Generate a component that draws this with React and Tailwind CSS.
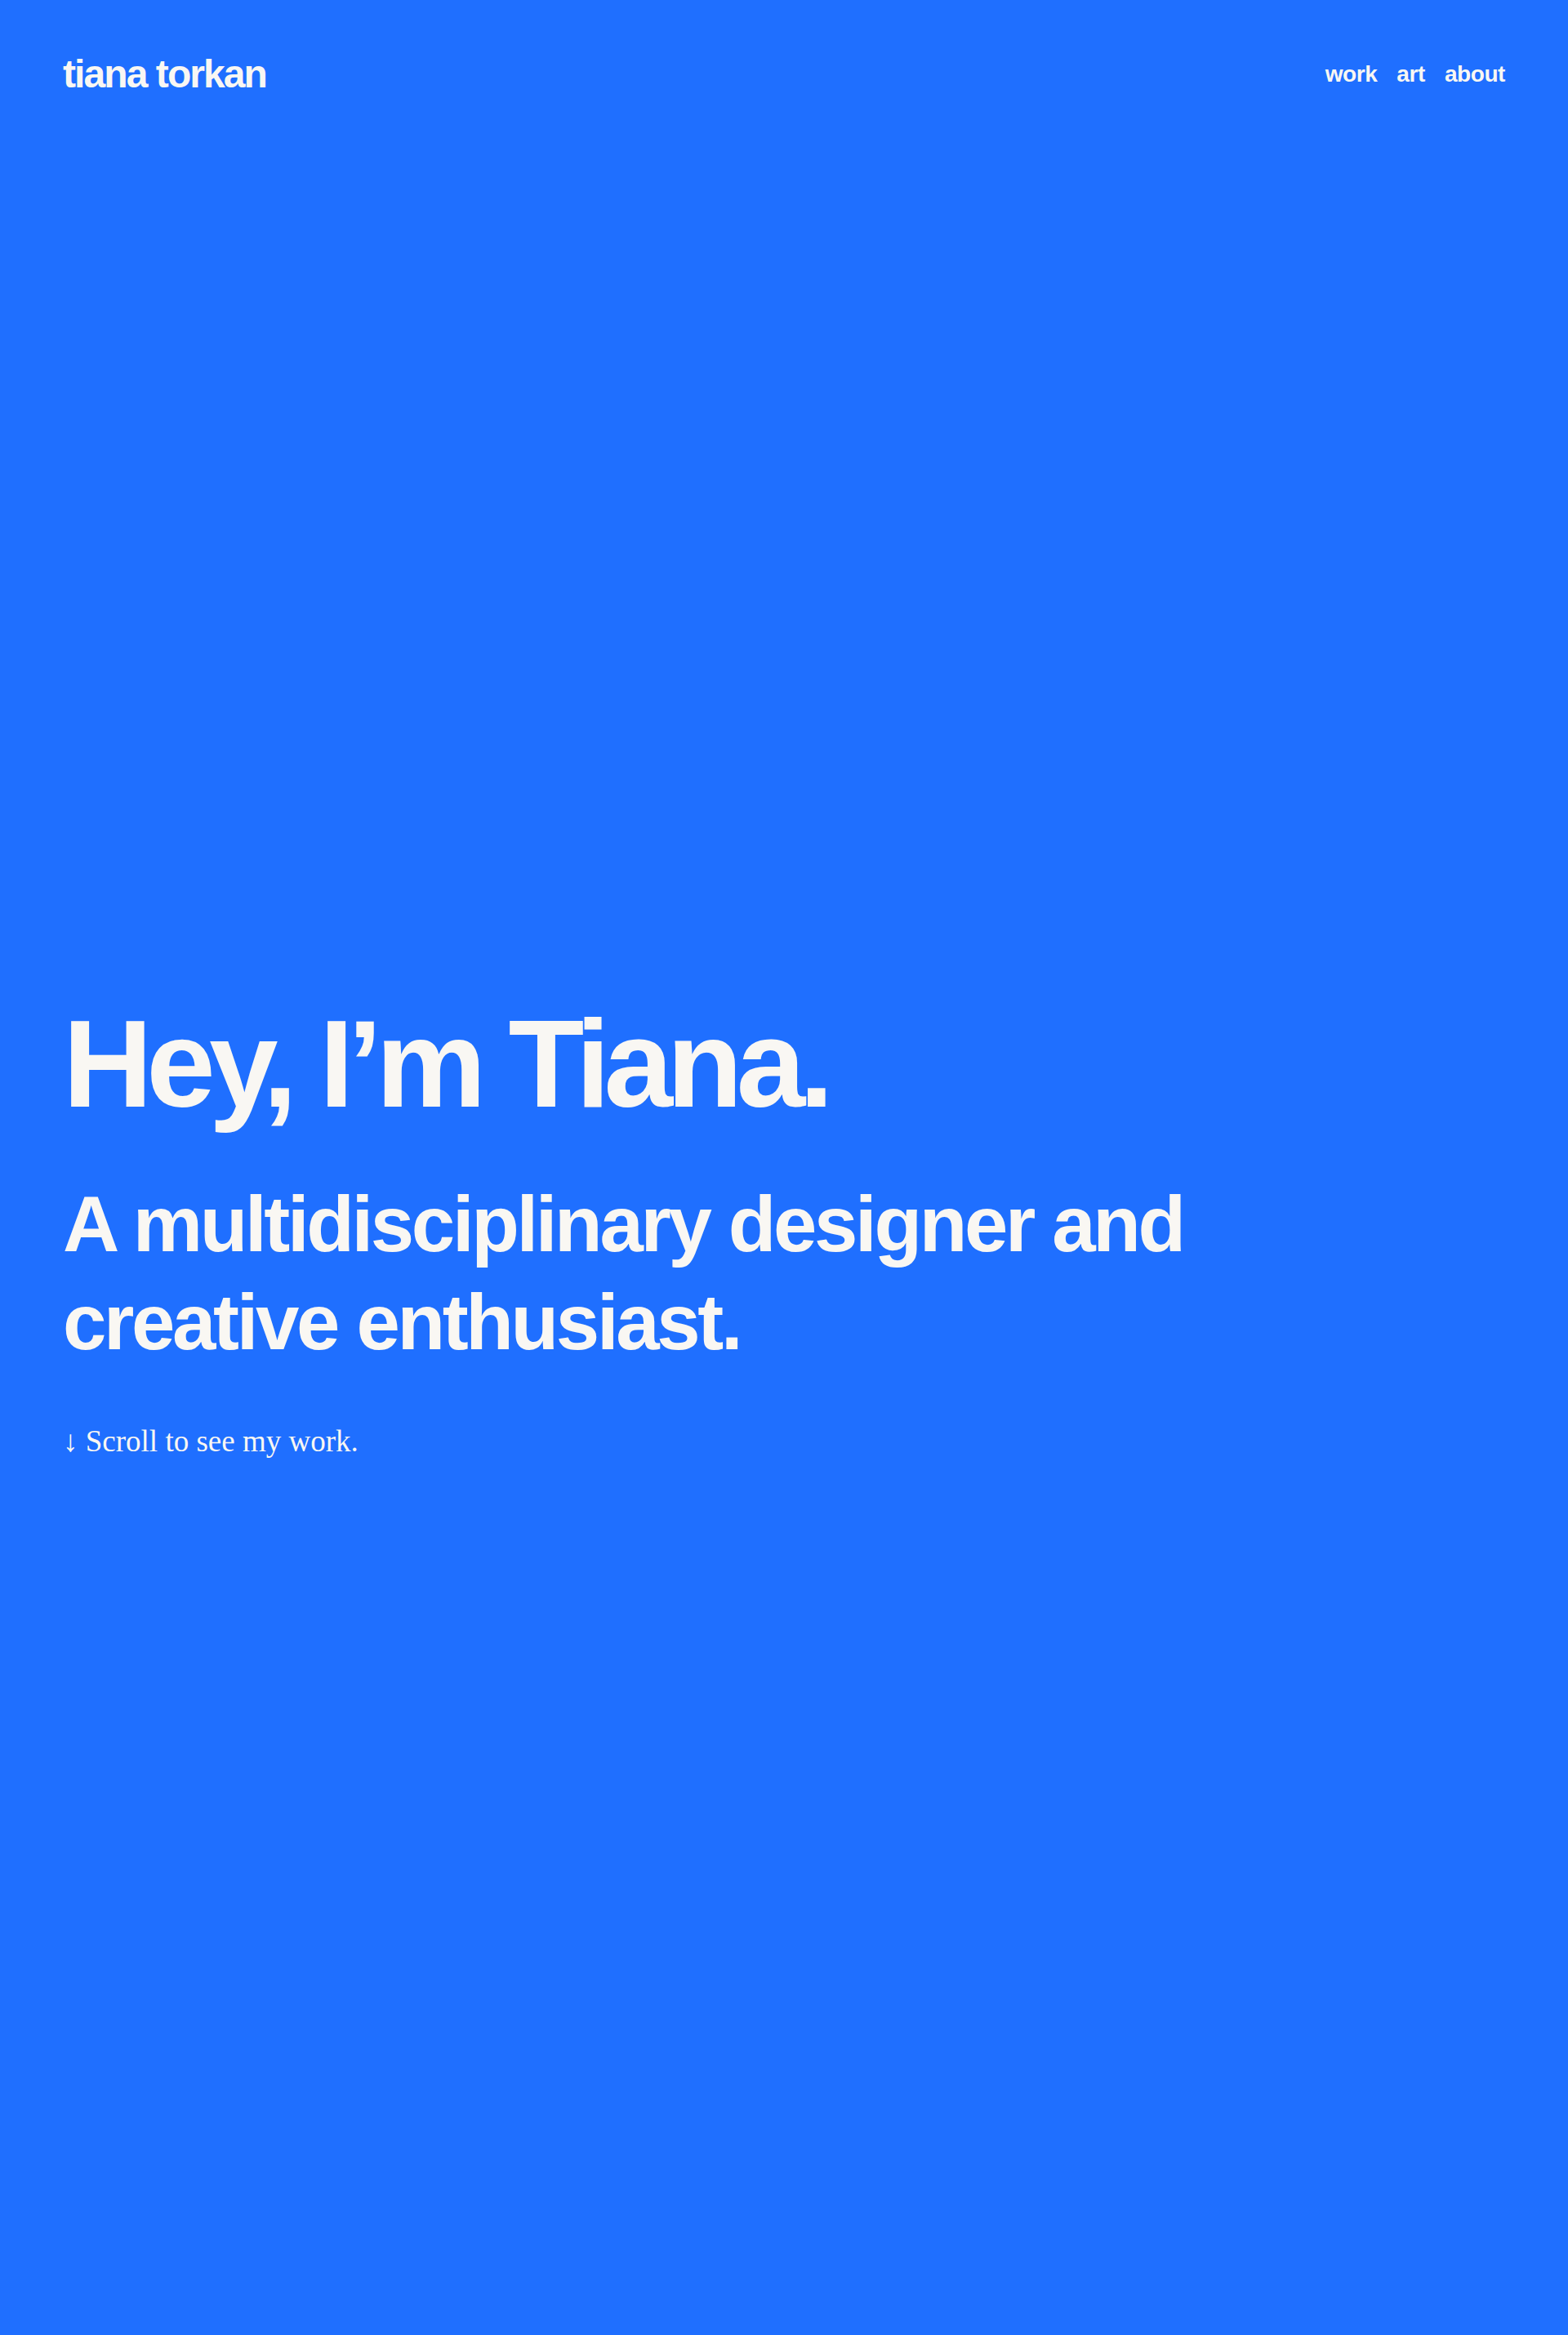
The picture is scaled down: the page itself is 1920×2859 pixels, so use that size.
export default function App() {
  return (
    <div className="min-h-screen flex flex-col bg-[#1f6fff] text-[#f9f7f3] font-['Liberation_Sans',Arial,sans-serif]">
      <header className="flex items-center justify-between px-[77px] pt-[62px] pb-[40px]">
        <a href="#" className="text-[48px] leading-[1.2] font-bold tracking-[-0.04em]">
          tiana torkan
        </a>
        <nav className="flex items-center gap-6 text-[28px] leading-[1.2] font-bold tracking-[-0.015em]">
          <a href="#">work</a>
          <a href="#">art</a>
          <a href="#">about</a>
        </nav>
      </header>
      <main className="flex-1 flex flex-col justify-center px-[77px]">
        <h1 className="text-[152px] leading-none font-bold tracking-[-0.05em]">
          Hey, I’m Tiana.
        </h1>
        <h2 className="mt-[61px] max-w-[1500px] text-[96px] leading-[1.25] font-bold tracking-[-0.035em]">
          A multidisciplinary designer and creative enthusiast.
        </h2>
        <p className="mt-[58px] text-[37px] leading-[1.5] font-['Liberation_Serif','Times_New_Roman',serif]">
          ↓ Scroll to see my work.
        </p>
      </main>
    </div>
  );
}
